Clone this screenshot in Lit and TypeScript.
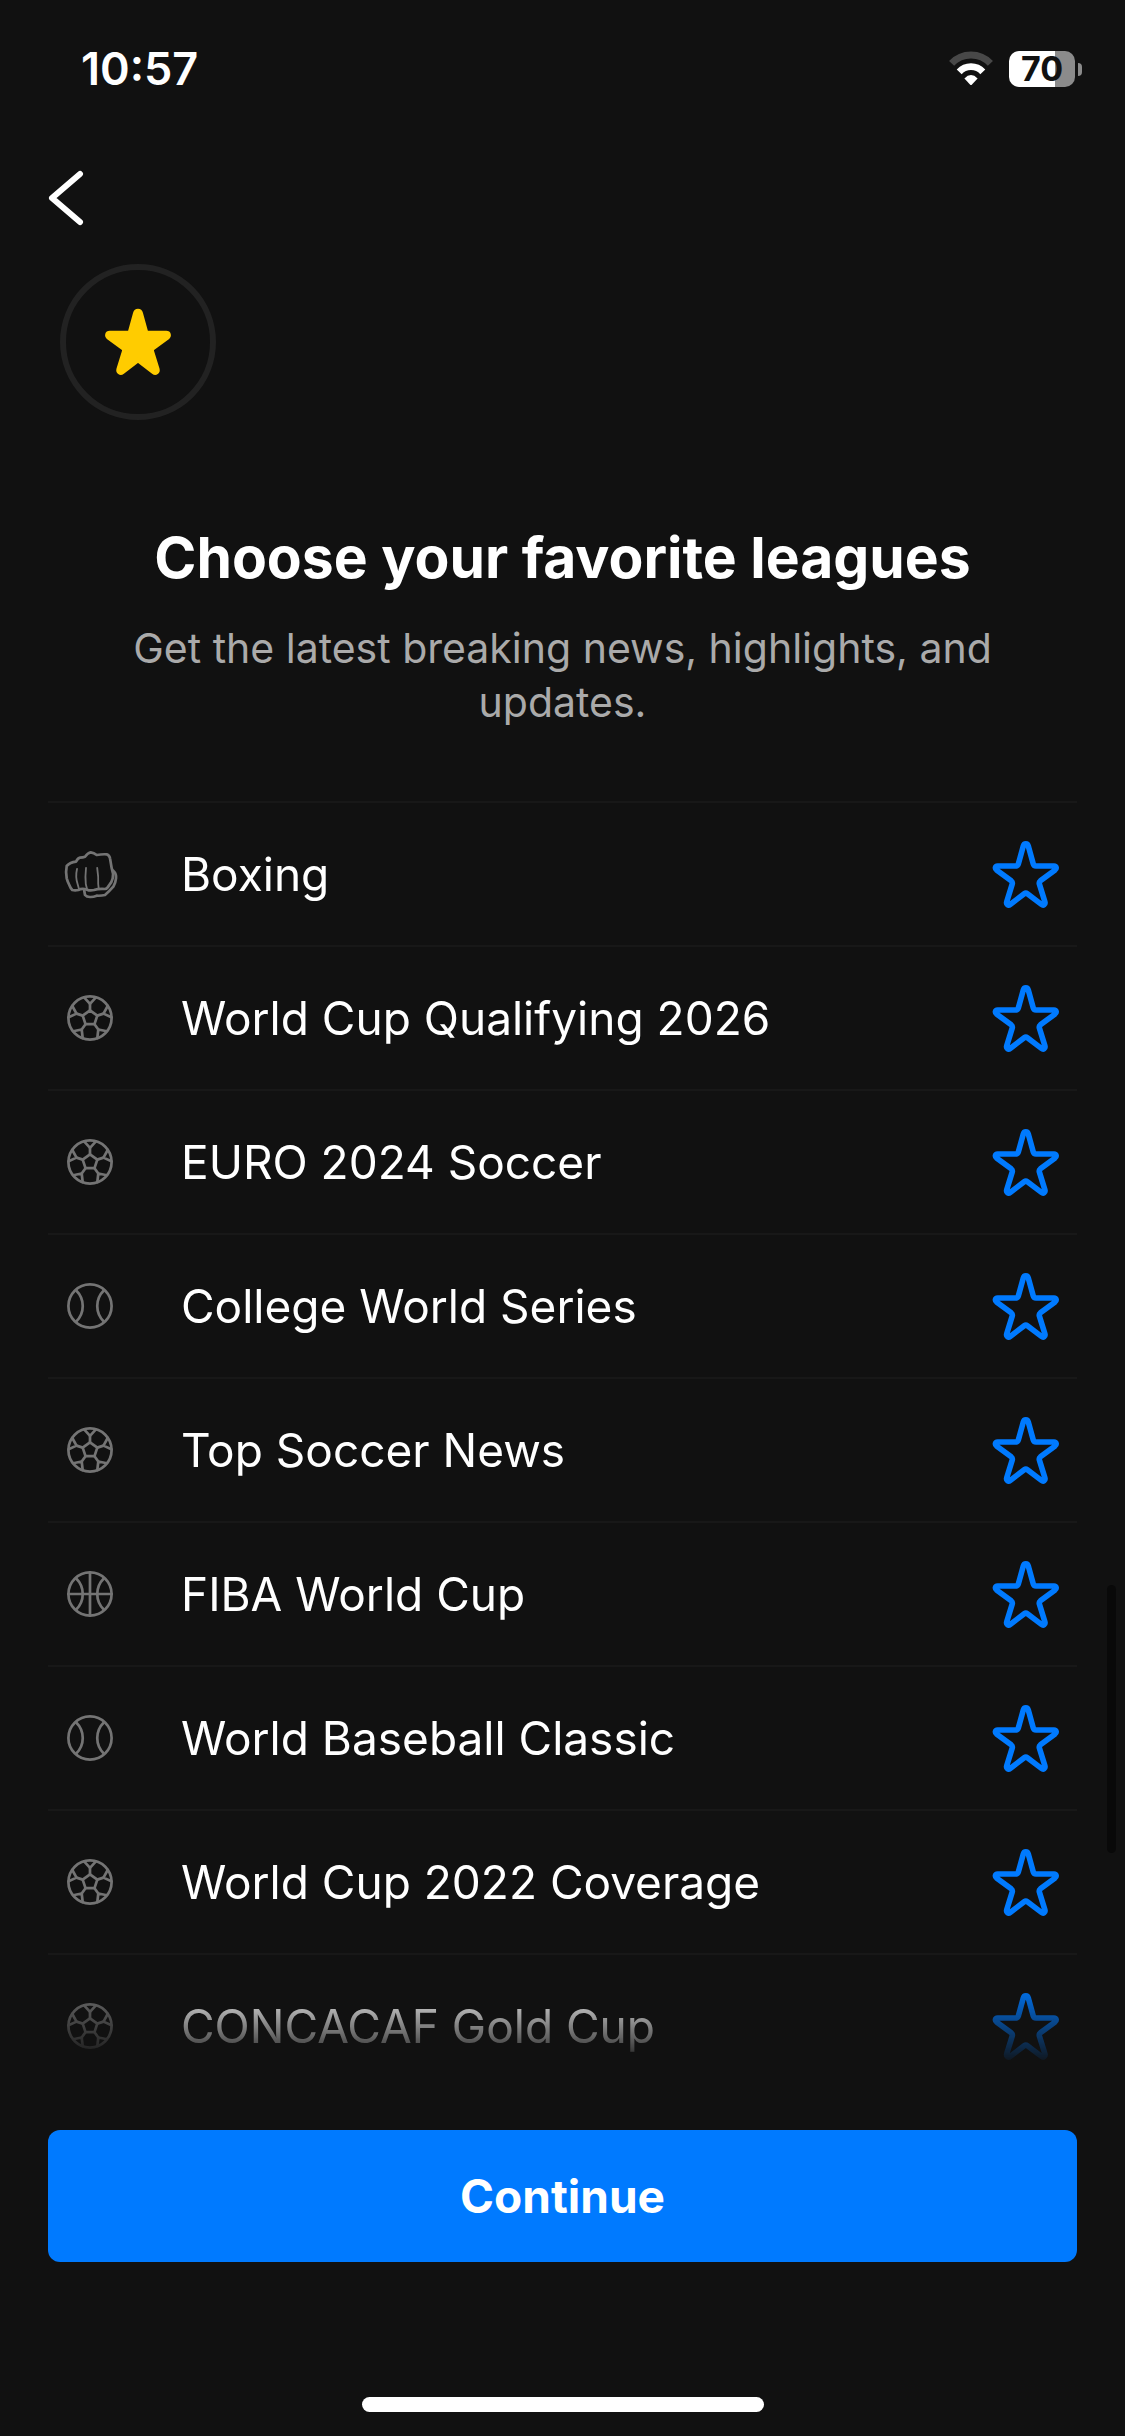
import { LitElement, html, svg, css } from "lit";
import { customElement, property, state } from "lit/decorators.js";

type Sport = "boxing" | "soccer" | "baseball" | "basketball";

interface League {
  name: string;
  sport: Sport;
}

const LEAGUES: League[] = [
  { name: "Boxing", sport: "boxing" },
  { name: "World Cup Qualifying 2026", sport: "soccer" },
  { name: "EURO 2024 Soccer", sport: "soccer" },
  { name: "College World Series", sport: "baseball" },
  { name: "Top Soccer News", sport: "soccer" },
  { name: "FIBA World Cup", sport: "basketball" },
  { name: "World Baseball Classic", sport: "baseball" },
  { name: "World Cup 2022 Coverage", sport: "soccer" },
  { name: "CONCACAF Gold Cup", sport: "soccer" },
];

const STAR_PATH =
  "M40.8 8.4 Q38.9 8.4 38.3 10.6 L33.4 28.3 Q32.8 30.5 30.6 30.5 L12.6 30.5 C10.2 30.5 9.7 33 11.5 34.4 L26.2 45.3 Q27.8 46.6 27.2 48.6 L21.7 66.4 C21 69 23.2 70.4 25.2 68.9 L39.2 58.2 Q40.8 57 42.4 58.2 L56.4 68.9 C58.4 70.4 60.6 69 59.9 66.4 L54.4 48.6 Q53.8 46.6 55.4 45.3 L70.1 34.4 C71.9 33 71.4 30.5 69 30.5 L51 30.5 Q48.8 30.5 48.2 28.3 L43.3 10.6 Q42.7 8.4 40.8 8.4 Z";

const SPORT_ART = {
  boxing: svg`
    <path d="M16 17.7 Q18 14 20 13.7 Q23 13.6 25 12.7 Q28 8.6 30.7 8.3 Q34 8.8 36.7 11 Q42 10 46.7 10.3 Q49.6 11.4 50 14.3 L51.7 24.3 Q53.8 30 52.7 34.3 Q51.8 38.4 49.3 41 Q47.4 44.6 45 45 Q38 44.6 34 46 Q30 47 27 45.7 Q22 44 18.3 46 Q15 46.8 12.3 46 Q10.4 44 9.3 41 Q7.4 37 6.7 34.3 Q5.6 27 6.7 22 Q10 18.4 16 17.7 Z"/>
    <path d="M53 26.6 Q56.6 30 56 34.3 Q55.6 39 53.3 42.7 Q49 47.6 45 51 Q41 52 36.7 51.7 Q33 53.2 30 53 Q26.6 53 25 51 L24.2 46.4"/>
    <path stroke-width="1.8" d="M17 25 Q15.2 33 17.6 40 L19 45 M26 24 Q25 33 25.8 40 L27 45 M37.2 24 Q38.6 33 38.2 40 L38.8 45"/>
  `,
  soccer: svg`
    <circle cx="30" cy="30" r="21.6"/>
    <path d="M30 22.3 L37.3 27.6 L34.5 36.2 H25.5 L22.7 27.6 Z"/>
    <path d="M30 22.3 V15.8 M37.3 27.6 L43.5 25.6 M34.5 36.2 L38.3 41.5 M25.5 36.2 L21.7 41.5 M22.7 27.6 L16.5 25.6"/>
    <path d="M24.1 9.4 L30 15.8 L35.9 9.4 M47.7 18 L43.5 25.6 L51.4 29.3 M46.9 43.2 L38.3 41.5 L37.3 50.1 M22.7 50.1 L21.7 41.5 L13.1 43.2 M8.6 29.3 L16.5 25.6 L12.3 18"/>
  `,
  baseball: svg`
    <circle cx="30" cy="30" r="21.6"/>
    <path d="M16 14.2 C25 23 25 37 16 45.8 M44 14.2 C35 23 35 37 44 45.8"/>
  `,
  basketball: svg`
    <circle cx="30" cy="30" r="21.6"/>
    <path d="M16 14.2 C25 23 25 37 16 45.8 M44 14.2 C35 23 35 37 44 45.8 M30 8.4 V51.6 M8.4 30 H51.6"/>
  `,
};

@customElement("status-bar")
class StatusBar extends LitElement {
  static styles = css`
    :host { display: flex; align-items: center; justify-content: space-between; height: 138px; padding: 0 43px 0 81px; box-sizing: border-box; }
    .time { font-size: 45px; line-height: 54px; font-weight: 600; }
    .indicators { display: flex; align-items: center; gap: 15px; }
    .wifi { width: 46px; height: 36px; }
    .battery { display: flex; align-items: center; gap: 3px; }
    .cell { width: 66px; height: 36px; border-radius: 10px; background: linear-gradient(90deg, #fff 70%, #8b8b8b 70%); color: #111; font-size: 34px; line-height: 36px; font-weight: 700; text-align: center; }
    .cap { width: 4px; height: 13px; border-radius: 0 6px 6px 0; background: #8b8b8b; }
  `;
  render() {
    return html`
      <span class="time">10:57</span>
      <div class="indicators">
        <svg class="wifi" viewBox="0 0 46 36" aria-hidden="true">
          <path d="M3.6 12.3 A26.6 26.6 0 0 1 42.4 12.3" fill="none" stroke="#484848" stroke-width="7"/>
          <path d="M11.2 20.8 A16.2 16.2 0 0 1 34.8 20.8" fill="none" stroke="#fff" stroke-width="6.8"/>
          <path d="M16.4 27.4 Q23 20.8 29.6 27.4 L24 33.4 Q23 34.4 22 33.4 Z" fill="#fff"/>
        </svg>
        <div class="battery"><div class="cell">70</div><div class="cap"></div></div>
      </div>
    `;
  }
}

@customElement("league-row")
class LeagueRow extends LitElement {
  @property({ attribute: false }) league!: League;
  @state() private chosen = false;

  static styles = css`
    :host { display: flex; align-items: center; height: 144px; padding: 0 12px; box-sizing: border-box; border-top: 2px solid #181818; }
    .sport { flex: none; width: 60px; height: 60px; fill: none; stroke: #747474; stroke-width: 2.7; stroke-linecap: round; stroke-linejoin: round; }
    .name { flex: 1; margin-left: 61px; font-size: 46px; line-height: 58px; }
    .pick { flex: none; display: flex; padding: 0; border: 0; background: none; cursor: pointer; }
    .star { width: 80px; height: 80px; fill: none; stroke: #007aff; stroke-width: 5.6; stroke-linejoin: round; }
    .filled { fill: #007aff; }
  `;
  render() {
    return html`
      <svg class="sport" viewBox="0 0 60 60" aria-hidden="true">${SPORT_ART[this.league.sport]}</svg>
      <span class="name">${this.league.name}</span>
      <button class="pick" type="button" aria-label=${`Favorite ${this.league.name}`} aria-pressed=${this.chosen} @click=${() => (this.chosen = !this.chosen)}>
        <svg class="star ${this.chosen ? "filled" : ""}" viewBox="0 -1.5 80 80" aria-hidden="true"><path d=${STAR_PATH}/></svg>
      </button>
    `;
  }
}

@customElement("app-root")
class AppRoot extends LitElement {
  static styles = css`
    :host { display: flex; flex-direction: column; height: 100vh; box-sizing: border-box; background: #111; color: #fff; font-family: Inter, "Liberation Sans", sans-serif; }
    .nav { display: flex; height: 120px; padding: 0 48px; align-items: center; }
    .back { display: flex; padding: 0; border: 0; background: none; cursor: pointer; }
    .chevron { width: 36px; height: 60px; fill: none; stroke: #fff; stroke-width: 6; stroke-linecap: round; stroke-linejoin: round; }
    .badge { display: flex; align-items: center; justify-content: center; width: 156px; height: 156px; margin: 6px 60px 0; border: 6px solid #222; border-radius: 50%; box-sizing: border-box; }
    .gold { width: 80px; height: 80px; fill: #fc0; stroke: #fc0; stroke-width: 5; stroke-linejoin: round; }
    .intro { padding: 102px 96px 0; text-align: center; }
    .title { margin: 0; font-size: 57px; line-height: 72px; font-weight: 700; }
    .subtitle { margin: 27px 0 0; font-size: 41px; line-height: 54px; color: #aaa; }
    .area { position: relative; flex: 1; min-height: 0; display: flex; margin-top: 72px; padding: 0 48px; }
    .list { flex: 1; margin: 0; padding: 0; list-style: none; overflow-y: auto; scrollbar-width: none; mask-image: linear-gradient(#000 calc(100% - 84px), transparent); }
    .thumb { position: absolute; top: 62%; right: 9px; width: 9px; height: 268px; border-radius: 5px; background: #090909; }
    .footer { display: flex; flex-direction: column; align-items: center; padding: 64px 48px 24px; }
    .continue { width: 100%; height: 132px; border: 0; border-radius: 12px; background: #007aff; color: #fff; font: inherit; font-size: 46px; line-height: 54px; font-weight: 700; cursor: pointer; }
    .home { width: 402px; height: 15px; margin-top: 135px; border-radius: 8px; background: #fff; }
  `;
  render() {
    return html`
      <status-bar></status-bar>
      <nav class="nav">
        <button class="back" type="button" aria-label="Back">
          <svg class="chevron" viewBox="0 0 36 60" aria-hidden="true"><path d="M32 6 L4 30 L32 54"/></svg>
        </button>
      </nav>
      <div class="badge"><svg class="gold" viewBox="0.8 -0.8 80 80" aria-hidden="true"><path d=${STAR_PATH}/></svg></div>
      <header class="intro">
        <h1 class="title">Choose your favorite leagues</h1>
        <p class="subtitle">Get the latest breaking news, highlights, and updates.</p>
      </header>
      <div class="area">
        <ul class="list">
          ${LEAGUES.map((league) => html`<li><league-row .league=${league}></league-row></li>`)}
        </ul>
        <div class="thumb"></div>
      </div>
      <footer class="footer">
        <button class="continue" type="button">Continue</button>
        <div class="home"></div>
      </footer>
    `;
  }
}
